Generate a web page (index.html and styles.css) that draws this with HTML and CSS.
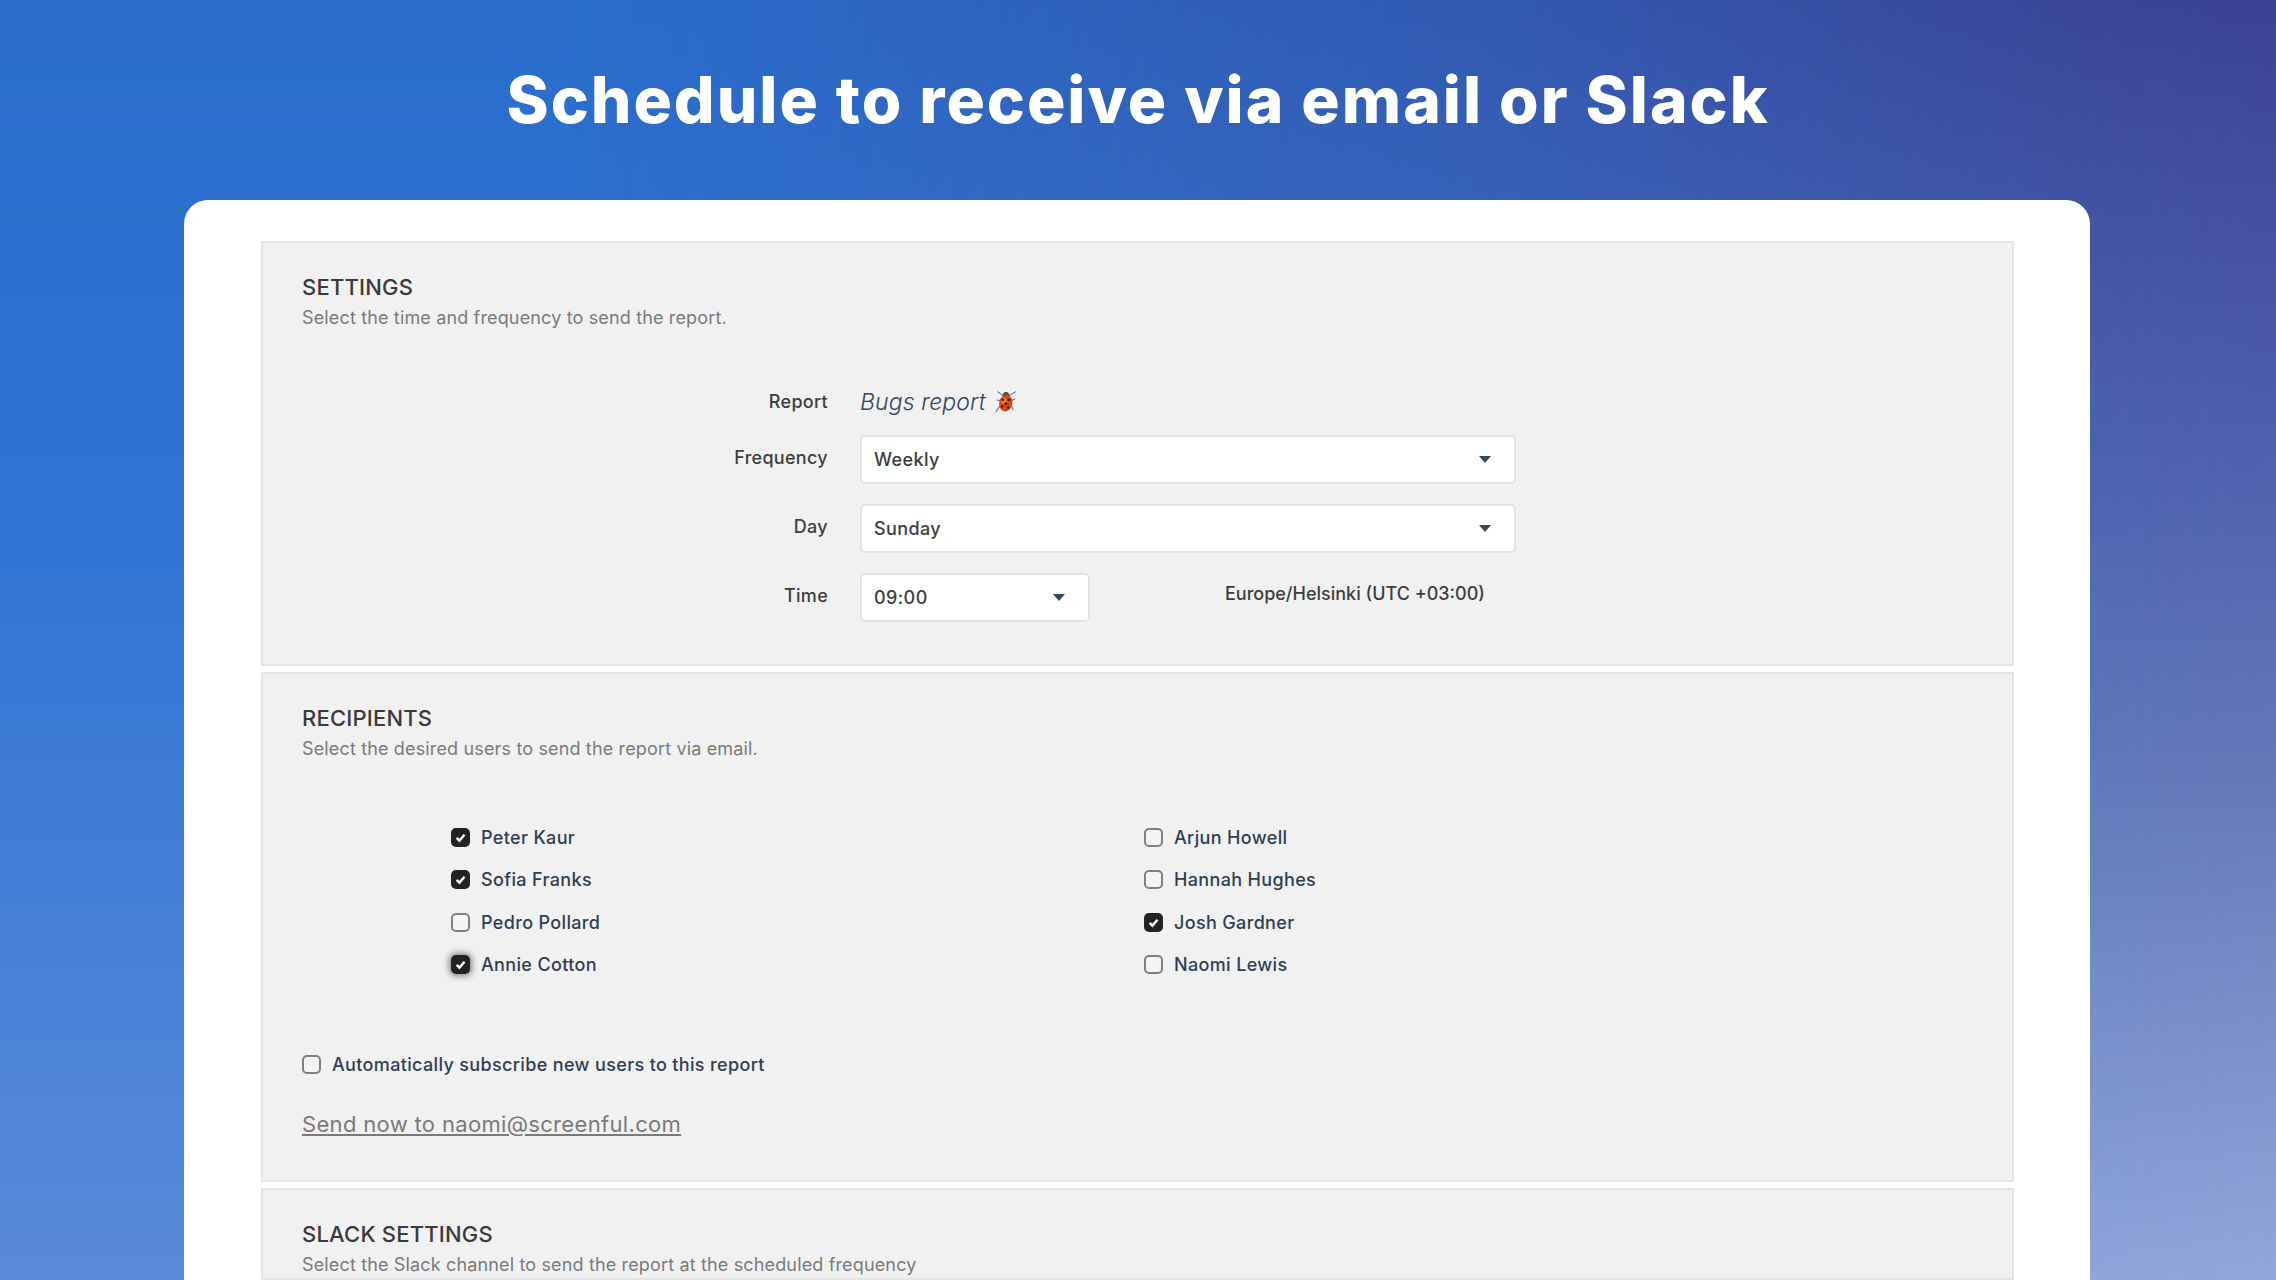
FILE: index.html
```html
<!DOCTYPE html>
<html lang="en">
<head>
<meta charset="utf-8">
<title>Schedule to receive via email or Slack</title>
<link rel="stylesheet" href="styles.css">
</head>
<body>
<h1 class="title">Schedule to receive via email or Slack</h1>
<main class="card">
  <section class="panel panel-settings">
    <h2 class="panel-title">SETTINGS</h2>
    <p class="panel-sub">Select the time and frequency to send the report.</p>
    <div class="form">
      <div class="form-row row-report">
        <span class="form-label">Report</span>
        <span class="report-name">Bugs report
          <svg class="bug" viewBox="0 0 20 20" aria-hidden="true">
            <g stroke="#6f6f6f" stroke-width="1" fill="none" stroke-linecap="round">
              <path d="M7 4 2.5 .8M13 4 18.5 .8M5.5 9 2 8.2M15 8.5 18 7.5M5 13 1 18.5M15 13.5 16.5 17"/>
            </g>
            <circle cx="10" cy="3.6" r="2.8" fill="#4a4a48"/>
            <ellipse cx="9.8" cy="11" rx="6" ry="7.6" fill="#d8461a" transform="rotate(12 9.8 11)"/>
            <ellipse cx="8" cy="9" rx="2.6" ry="3" fill="#ee7a22"/>
            <g fill="#2c1a12"><circle cx="7" cy="8" r="1.1"/><circle cx="12.6" cy="8" r="1.2"/><circle cx="9.8" cy="11.6" r="1.2"/><circle cx="6.4" cy="14" r="1"/><circle cx="12" cy="15.2" r="1"/></g>
          </svg>
        </span>
      </div>
      <div class="form-row">
        <span class="form-label">Frequency</span>
        <div class="select select-wide"><span>Weekly</span><i class="caret"></i></div>
      </div>
      <div class="form-row">
        <span class="form-label">Day</span>
        <div class="select select-wide"><span>Sunday</span><i class="caret"></i></div>
      </div>
      <div class="form-row">
        <span class="form-label">Time</span>
        <div class="select select-time"><span>09:00</span><i class="caret"></i></div>
        <span class="timezone">Europe/Helsinki (UTC +03:00)</span>
      </div>
    </div>
  </section>

  <section class="panel panel-recipients">
    <h2 class="panel-title">RECIPIENTS</h2>
    <p class="panel-sub">Select the desired users to send the report via email.</p>
    <div class="people">
      <label class="check"><span class="box on"><svg viewBox="0 0 12 12"><path d="M2.4 6.4 5 8.9 9.7 3.4"/></svg></span>Peter Kaur</label>
      <label class="check"><span class="box"></span>Arjun Howell</label>
      <label class="check"><span class="box on"><svg viewBox="0 0 12 12"><path d="M2.4 6.4 5 8.9 9.7 3.4"/></svg></span>Sofia Franks</label>
      <label class="check"><span class="box"></span>Hannah Hughes</label>
      <label class="check"><span class="box"></span>Pedro Pollard</label>
      <label class="check"><span class="box on"><svg viewBox="0 0 12 12"><path d="M2.4 6.4 5 8.9 9.7 3.4"/></svg></span>Josh Gardner</label>
      <label class="check"><span class="box on focus"><svg viewBox="0 0 12 12"><path d="M2.4 6.4 5 8.9 9.7 3.4"/></svg></span>Annie Cotton</label>
      <label class="check"><span class="box"></span>Naomi Lewis</label>
    </div>
    <label class="check check-auto"><span class="box"></span>Automatically subscribe new users to this report</label>
    <a class="send-link" href="#">Send now to naomi@screenful.com</a>
  </section>

  <section class="panel panel-slack">
    <h2 class="panel-title">SLACK SETTINGS</h2>
    <p class="panel-sub">Select the Slack channel to send the report at the scheduled frequency</p>
  </section>
</main>
</body>
</html>
```

FILE: styles.css
```css
* { box-sizing: border-box; }

body {
  position: relative;
  margin: 0;
  height: 1280px;
  overflow: hidden;
  font-family: Inter, "Open Sans", "Liberation Sans", sans-serif;
  color: #2f3e52;
  background: linear-gradient(180deg, #2a6dcb 0%, #2f74d4 40%, #5a8ad9 100%);
}

/* purple wash that takes over toward the right edge */
body::before {
  content: "";
  position: absolute;
  inset: 0;
  z-index: -1;
  background: linear-gradient(180deg, #3b4292 0%, #4f60ad 35%, #6478b8 60%, #92a7db 100%);
  -webkit-mask-image: linear-gradient(90deg, transparent 25%, rgba(0, 0, 0, 0.45) 65%, rgba(0, 0, 0, 0.92) 92%, #000 100%);
  mask-image: linear-gradient(90deg, transparent 25%, rgba(0, 0, 0, 0.45) 65%, rgba(0, 0, 0, 0.92) 92%, #000 100%);
}

.title {
  margin: 0;
  height: 200px;
  padding-top: 62px;
  text-align: center;
  font-size: 64px;
  line-height: 76px;
  font-weight: 800;
  letter-spacing: 2px;
  color: #fff;
}

.card {
  margin: 0 186px 0 184px;
  height: 1080px;
  padding: 41px 76px 0 77px;
  background: #fff;
  border-radius: 24px 24px 0 0;
  display: flex;
  flex-direction: column;
  gap: 6px;
}

.panel {
  background: #f1f1f1;
  border: 2px solid #e4e4e4;
  padding: 30px 39px 0;
}

.panel-settings { height: 425px; }
.panel-recipients { height: 510px; }
.panel-slack { flex: 1; }

.panel-title {
  margin: 0;
  font-size: 22px;
  line-height: 28px;
  font-weight: 500;
  letter-spacing: 0.2px;
  color: #3a3a3a;
}

.panel-sub {
  margin: 5px 0 0;
  font-size: 18px;
  line-height: 24px;
  font-weight: 400;
  letter-spacing: 0.15px;
  color: #7a7a7a;
}

.form {
  margin-top: 56px;
  display: flex;
  flex-direction: column;
  gap: 20px;
}

.form-row {
  display: flex;
  align-items: center;
  gap: 32px;
}

.row-report {
  height: 29px;
  align-items: flex-start;
}

.form-label {
  flex: none;
  width: 526px;
  margin-top: -3px;
  text-align: right;
  font-size: 18px;
  line-height: 32px;
  font-weight: 500;
  letter-spacing: 0.3px;
  color: #3d3d3d;
}

.row-report .form-label { margin-top: 0; }

.report-name {
  display: inline-flex;
  align-items: center;
  gap: 9px;
  font-size: 23px;
  line-height: 32px;
  font-style: italic;
  font-weight: 300;
  letter-spacing: 0.1px;
  color: #33455c;
}

.bug { width: 22px; height: 22px; }

.select {
  height: 49px;
  padding: 0 23px 0 12px;
  display: flex;
  align-items: center;
  justify-content: space-between;
  background: #fff;
  border: 2px solid #e2e2e2;
  border-radius: 5px;
  font-size: 18px;
  font-weight: 500;
  letter-spacing: 0.4px;
  color: #3d3d3d;
}

.select-wide { width: 656px; }
.select-time { width: 230px; }

.caret {
  flex: none;
  width: 0;
  height: 0;
  border-left: 6px solid transparent;
  border-right: 6px solid transparent;
  border-top: 7px solid #33475f;
}

.timezone {
  margin-left: 103px;
  margin-top: -8px;
  font-size: 18px;
  line-height: 24px;
  font-weight: 500;
  color: #3d3d3d;
}

.people {
  margin: 55px 0 0 149px;
  display: grid;
  grid-template-columns: 693px 1fr;
  grid-auto-rows: 42.5px;
}

.check {
  display: flex;
  align-items: center;
  gap: 11px;
  font-size: 18px;
  font-weight: 500;
  letter-spacing: 0.35px;
  color: #2f3e52;
}

.box {
  flex: none;
  width: 19px;
  height: 19px;
  border: 2.5px solid #808080;
  border-radius: 5px;
  background: #f4f4f4;
  display: flex;
}

.box svg {
  width: 100%;
  height: 100%;
  fill: none;
  stroke: #fff;
  stroke-width: 2.2;
}

.box.on {
  border: 0;
  padding: 3px;
  background: #222226;
}

.box.focus { box-shadow: 0 0 6px 2px rgba(0, 0, 0, 0.45); }

.check-auto {
  margin-top: 63px;
  height: 30px;
}

.send-link {
  display: inline-block;
  margin-top: 29px;
  font-size: 22px;
  line-height: 32px;
  letter-spacing: 0.33px;
  color: #7a7a7a;
}
```
